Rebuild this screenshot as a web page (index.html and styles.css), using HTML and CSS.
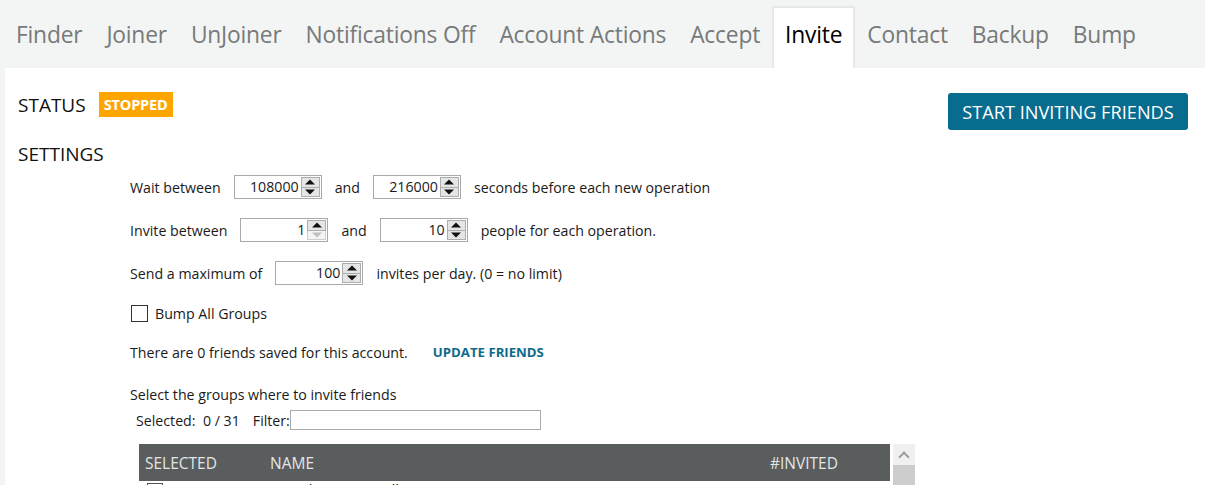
FILE: index.html
```html
<!DOCTYPE html>
<html>
<head>
<meta charset="utf-8">
<link rel="stylesheet" href="styles.css">
</head>
<body>
<div class="app">
  <nav class="tabs">
    <div class="tab">Finder</div>
    <div class="tab">Joiner</div>
    <div class="tab">UnJoiner</div>
    <div class="tab">Notifications Off</div>
    <div class="tab">Account Actions</div>
    <div class="tab">Accept</div>
    <div class="tab active">Invite</div>
    <div class="tab">Contact</div>
    <div class="tab">Backup</div>
    <div class="tab">Bump</div>
  </nav>
  <main class="panel">
    <div class="top">
      <div class="heads">
        <div class="status"><span class="h">STATUS</span><span class="badge">STOPPED</span></div>
        <div class="h settings">SETTINGS</div>
      </div>
      <button class="start">START INVITING FRIENDS</button>
    </div>
    <div class="form">
      <div class="row r1">
        <span>Wait between</span>
        <span class="spin"><span class="val">108000</span><span class="btns"><span class="b up"></span><span class="b down"></span></span></span>
        <span>and</span>
        <span class="spin"><span class="val">216000</span><span class="btns"><span class="b up"></span><span class="b down"></span></span></span>
        <span>seconds before each new operation</span>
      </div>
      <div class="row r2">
        <span>Invite between</span>
        <span class="spin"><span class="val">1</span><span class="btns"><span class="b up"></span><span class="b down dis"></span></span></span>
        <span>and</span>
        <span class="spin"><span class="val">10</span><span class="btns"><span class="b up"></span><span class="b down"></span></span></span>
        <span>people for each operation.</span>
      </div>
      <div class="row r3">
        <span>Send a maximum of</span>
        <span class="spin"><span class="val">100</span><span class="btns"><span class="b up"></span><span class="b down"></span></span></span>
        <span>invites per day. (0 = no limit)</span>
      </div>
      <div class="row r4">
        <span class="check"></span><span>Bump All Groups</span>
      </div>
      <div class="row r5">
        <span>There are 0 friends saved for this account.</span>
        <span class="update">UPDATE FRIENDS</span>
      </div>
      <div class="row r6">Select the groups where to invite friends</div>
      <div class="row r7">
        <span>Selected:&nbsp; 0 / 31</span>
        <span class="flabel">Filter:</span><span class="filter"></span>
      </div>
      <div class="tablewrap">
        <div class="table">
          <div class="thead">
            <span class="c1">SELECTED</span>
            <span class="c2">NAME</span>
            <span class="c3">#INVITED</span>
          </div>
          <div class="trow">
            <span class="c1"><span class="check small"></span></span>
            <span class="c2">Brandon group village</span>
            <span class="c3">0</span>
          </div>
        </div>
        <div class="scroll"><div class="arrow"></div><div class="thumb"></div></div>
      </div>
    </div>
  </main>
</div>
</body>
</html>
```
FILE: styles.css
```css
* { box-sizing: border-box; }
html, body { margin: 0; padding: 0; }
body {
  width: 1205px;
  height: 485px;
  overflow: hidden;
  background: #f3f4f4;
  font-family: "Open Sans", "Noto Sans", sans-serif;
  color: #1a1a1a;
}
.app { display: flex; flex-direction: column; height: 485px; }
.tabs {
  display: flex;
  flex-shrink: 0;
  height: 68px;
  padding: 6px 0 0 4px;
  align-items: stretch;
}
.tab {
  font-size: 22.8px;
  color: #777a7a;
  padding: 13px 12px 0 12px;
  letter-spacing: -0.2px;
}
.tab.active {
  background: #fff;
  color: #000;
  border: 2px solid #e6e8e8;
  border-bottom: none;
  padding: 11px 11px 0 11px;
}
.panel {
  flex: 1;
  background: #fff;
  margin-left: 5px;
  padding: 0 0 0 13px;
  overflow: hidden;
}
.top { display: flex; justify-content: space-between; padding-top: 24px; padding-right: 17px; }
.status { display: flex; align-items: center; gap: 13px; height: 25px; }
.h { font-size: 19px; color: #111; }
.badge {
  background: #ffa500;
  color: #fff;
  font-weight: 700;
  font-size: 14.6px;
  padding: 3px 5px;
  letter-spacing: -0.2px;
  line-height: 19px;
}
.settings { margin-top: 24px; }
.start {
  background: #086c8e;
  color: #fff;
  border: none;
  border-radius: 3px;
  font-family: inherit;
  font-size: 18.2px;
  height: 37px;
  width: 240px;
  padding: 0;
  margin-top: 1px;
}
.form { padding-left: 112px; font-size: 14.2px; color: #1a1a1a; }
.row { display: flex; align-items: center; gap: 13px; }
.r1 { margin-top: 8px; height: 24px; }
.r2 { margin-top: 19px; height: 24px; }
.r3 { margin-top: 19px; height: 24px; }
.r4 { margin-top: 19px; height: 18px; gap: 7px; }
.r5 { margin-top: 20px; height: 20px; gap: 25px; }
.r6 { margin-top: 22px; height: 20px; }
.r7 { margin-top: 5px; height: 22px; padding-left: 6px; gap: 0; }
.spin {
  display: inline-flex;
  border: 1px solid #a9a9a9;
  height: 24px;
  width: 88px;
}
.val { flex: 1; text-align: right; padding-right: 2px; line-height: 22px; }
.btns { display: flex; flex-direction: column; width: 20px; padding: 1px 1px 1px 0; }
.b {
  flex: 1;
  background: #e5e5e5;
  border: 1px solid #adadad;
  position: relative;
}
.b.down { border-top: none; }
.b::after {
  content: "";
  position: absolute;
  left: 50%;
  top: 50%;
  transform: translate(-50%, -50%);
  border-left: 5px solid transparent;
  border-right: 5px solid transparent;
}
.up::after { border-bottom: 5px solid #111; }
.down::after { border-top: 5px solid #111; }
.down.dis { background: #f4f4f4; border-color: #cfcfcf; }
.down.dis::after { border-top-color: #bfbfbf; }
.check {
  width: 17px; height: 17px;
  border: 1px solid #333;
  background: #fff;
  display: inline-block;
  margin-left: 1px;
}
.update { color: #0e6a89; font-weight: 700; font-size: 13.2px; }
.flabel { margin-left: 13px; }
.filter { width: 251px; height: 20px; border: 1px solid #a9a9a9; display: inline-block; }
.tablewrap { display: flex; margin-top: 13px; padding-left: 9px; }
.table { width: 751px; }
.thead {
  background: #5a5d5e;
  color: #e4e6e6;
  height: 37px;
  display: flex;
  align-items: center;
  font-size: 15.5px;
}
.c1 { width: 131px; padding-left: 6px; }
.c2 { width: 500px; }
.c3 { width: 120px; }
.trow { display: flex; height: 30px; align-items: flex-start; line-height: 16px; font-size: 15px; }
.trow .c1 { padding-left: 7px; padding-top: 2px; }
.check.small { width: 16px; height: 16px; border-color: #555; }
.scroll { width: 22px; margin-left: 3px; background: #f0f0f0; height: 60px; }
.arrow { height: 21px; position: relative; }
.arrow::after {
  content: "";
  position: absolute; left: 7px; top: 9px;
  width: 6px; height: 6px;
  border-left: 2px solid #a0a0a0;
  border-top: 2px solid #a0a0a0;
  transform: rotate(45deg);
}
.thumb { background: #cdcdcd; height: 40px; }
```
